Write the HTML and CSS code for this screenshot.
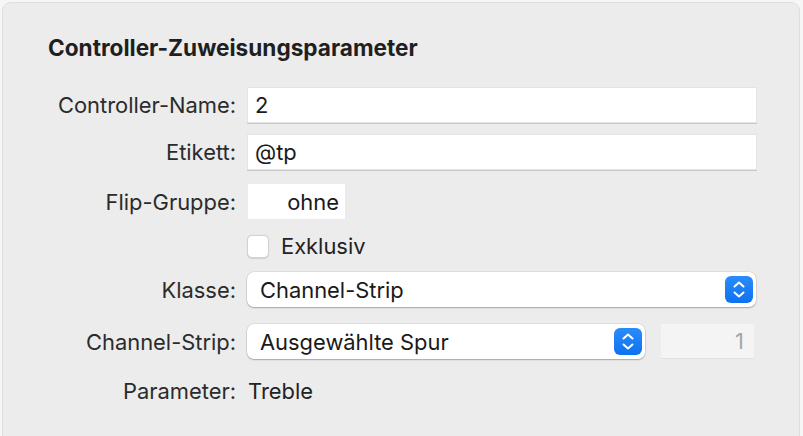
FILE: index.html
```html
<!DOCTYPE html>
<html lang="de">
<head>
  <meta charset="UTF-8" />
  <title>Controller-Zuweisungsparameter</title>
  <link rel="stylesheet" href="styles.css">
</head>
<body>
  <div class="panel">
    <h2 class="panel-title">Controller-Zuweisungsparameter</h2>

    <div class="form">
      <div class="row row-name">
        <label class="label">Controller-Name:</label>
        <div class="field text-field">2</div>
      </div>

      <div class="row row-tag">
        <label class="label">Etikett:</label>
        <div class="field text-field">@tp</div>
      </div>

      <div class="row row-flip">
        <label class="label">Flip-Gruppe:</label>
        <div class="field flip-field">ohne</div>
      </div>

      <div class="row row-check">
        <span class="label"></span>
        <div class="check-wrap">
          <span class="checkbox"></span>
          <span class="check-text">Exklusiv</span>
        </div>
      </div>

      <div class="row row-class">
        <label class="label">Klasse:</label>
        <div class="field popup popup-wide">
          <span>Channel-Strip</span>
          <span class="stepper">
            <svg width="28" height="27" viewBox="0 0 28 27">
              <path d="M9.5 10.5 L14 6.5 L18.5 10.5" fill="none" stroke="#fff" stroke-width="2" stroke-linecap="round" stroke-linejoin="round"/>
              <path d="M9.5 16.5 L14 20.5 L18.5 16.5" fill="none" stroke="#fff" stroke-width="2" stroke-linecap="round" stroke-linejoin="round"/>
            </svg>
          </span>
        </div>
      </div>

      <div class="row row-strip">
        <label class="label">Channel-Strip:</label>
        <div class="strip-fields">
          <div class="field popup popup-strip">
            <span>Ausgewählte Spur</span>
            <span class="stepper">
              <svg width="28" height="27" viewBox="0 0 28 27">
                <path d="M9.5 10.5 L14 6.5 L18.5 10.5" fill="none" stroke="#fff" stroke-width="2" stroke-linecap="round" stroke-linejoin="round"/>
                <path d="M9.5 16.5 L14 20.5 L18.5 16.5" fill="none" stroke="#fff" stroke-width="2" stroke-linecap="round" stroke-linejoin="round"/>
              </svg>
            </span>
          </div>
          <div class="field number-field">1</div>
        </div>
      </div>

      <div class="row row-param">
        <label class="label">Parameter:</label>
        <span class="value">Treble</span>
      </div>
    </div>
  </div>
</body>
</html>
```

FILE: styles.css
```css
body {
  margin: 0;
  background: #f6f6f6;
  font-family: Inter, "Noto Sans", sans-serif;
  color: #222;
  height: 436px;
  overflow: hidden;
}

.panel {
  margin: 2px 3px 0 2px;
  height: 434px;
  background: #ececec;
  border: 1px solid #dedede;
  border-bottom: 0;
  border-radius: 9px 9px 0 0;
  box-sizing: border-box;
  padding-top: 32px;
}

.panel-title {
  margin: 0 0 0 45px;
  font-size: 22.6px;
  font-weight: 700;
  line-height: 26px;
  color: #1f1f1f;
}

.form {
  display: flex;
  flex-direction: column;
  margin-top: 27px;
}

.row {
  display: flex;
  align-items: center;
  gap: 11px;
  height: 34px;
}

.row-tag { margin-top: 13px; }
.row-flip { margin-top: 15px; height: 35px; }
.row-check { margin-top: 10px; }
.row-class { margin-top: 9px; height: 35px; }
.row-strip { margin-top: 17px; height: 35px; }
.row-param { margin-top: 15px; height: 34px; }

.label {
  width: 233px;
  flex-shrink: 0;
  text-align: right;
  font-size: 21.9px;
  color: #2b2b2b;
}

.field {
  box-sizing: border-box;
  height: 100%;
  background: #fff;
  font-size: 21.9px;
  display: flex;
  align-items: center;
  color: #1a1a1a;
}

.text-field {
  width: 508px;
  padding-left: 7px;
  box-shadow: 0 0 0 1px #e4e4e4, 0 1px 0 1px #c9c9c9;
  margin-left: 1px;
}

.flip-field {
  width: 97px;
  margin-left: 1px;
  justify-content: flex-end;
  padding-right: 6px;
}

.check-wrap {
  display: flex;
  align-items: center;
  gap: 12px;
}

.checkbox {
  width: 22px;
  height: 23px;
  box-sizing: border-box;
  background: #fff;
  border: 1px solid #d2d2d2;
  border-radius: 5px;
  box-shadow: 0 0.5px 1px rgba(0, 0, 0, 0.12);
}

.check-text {
  font-size: 21.9px;
  color: #222;
}

.popup {
  border-radius: 7px;
  padding: 0 3px 0 13px;
  justify-content: space-between;
  box-shadow: 0 0 0 0.5px rgba(0, 0, 0, 0.12), 0 1px 1.5px rgba(0, 0, 0, 0.25);
}

.popup-wide { width: 509px; }
.popup-strip { width: 398px; }

.stepper {
  width: 28px;
  height: 27px;
  border-radius: 6px;
  background: linear-gradient(#2a8bfa, #0c72f0);
  display: flex;
}

.strip-fields {
  display: flex;
  gap: 16px;
  height: 100%;
}

.number-field {
  width: 93px;
  height: 34px;
  background: #f4f4f4;
  box-shadow: 0 1px 0 #e0e0e0;
  justify-content: flex-end;
  padding-right: 10px;
  color: #a6a6a6;
}

.value {
  font-size: 21.9px;
  color: #222;
  margin-left: 1px;
}
```
